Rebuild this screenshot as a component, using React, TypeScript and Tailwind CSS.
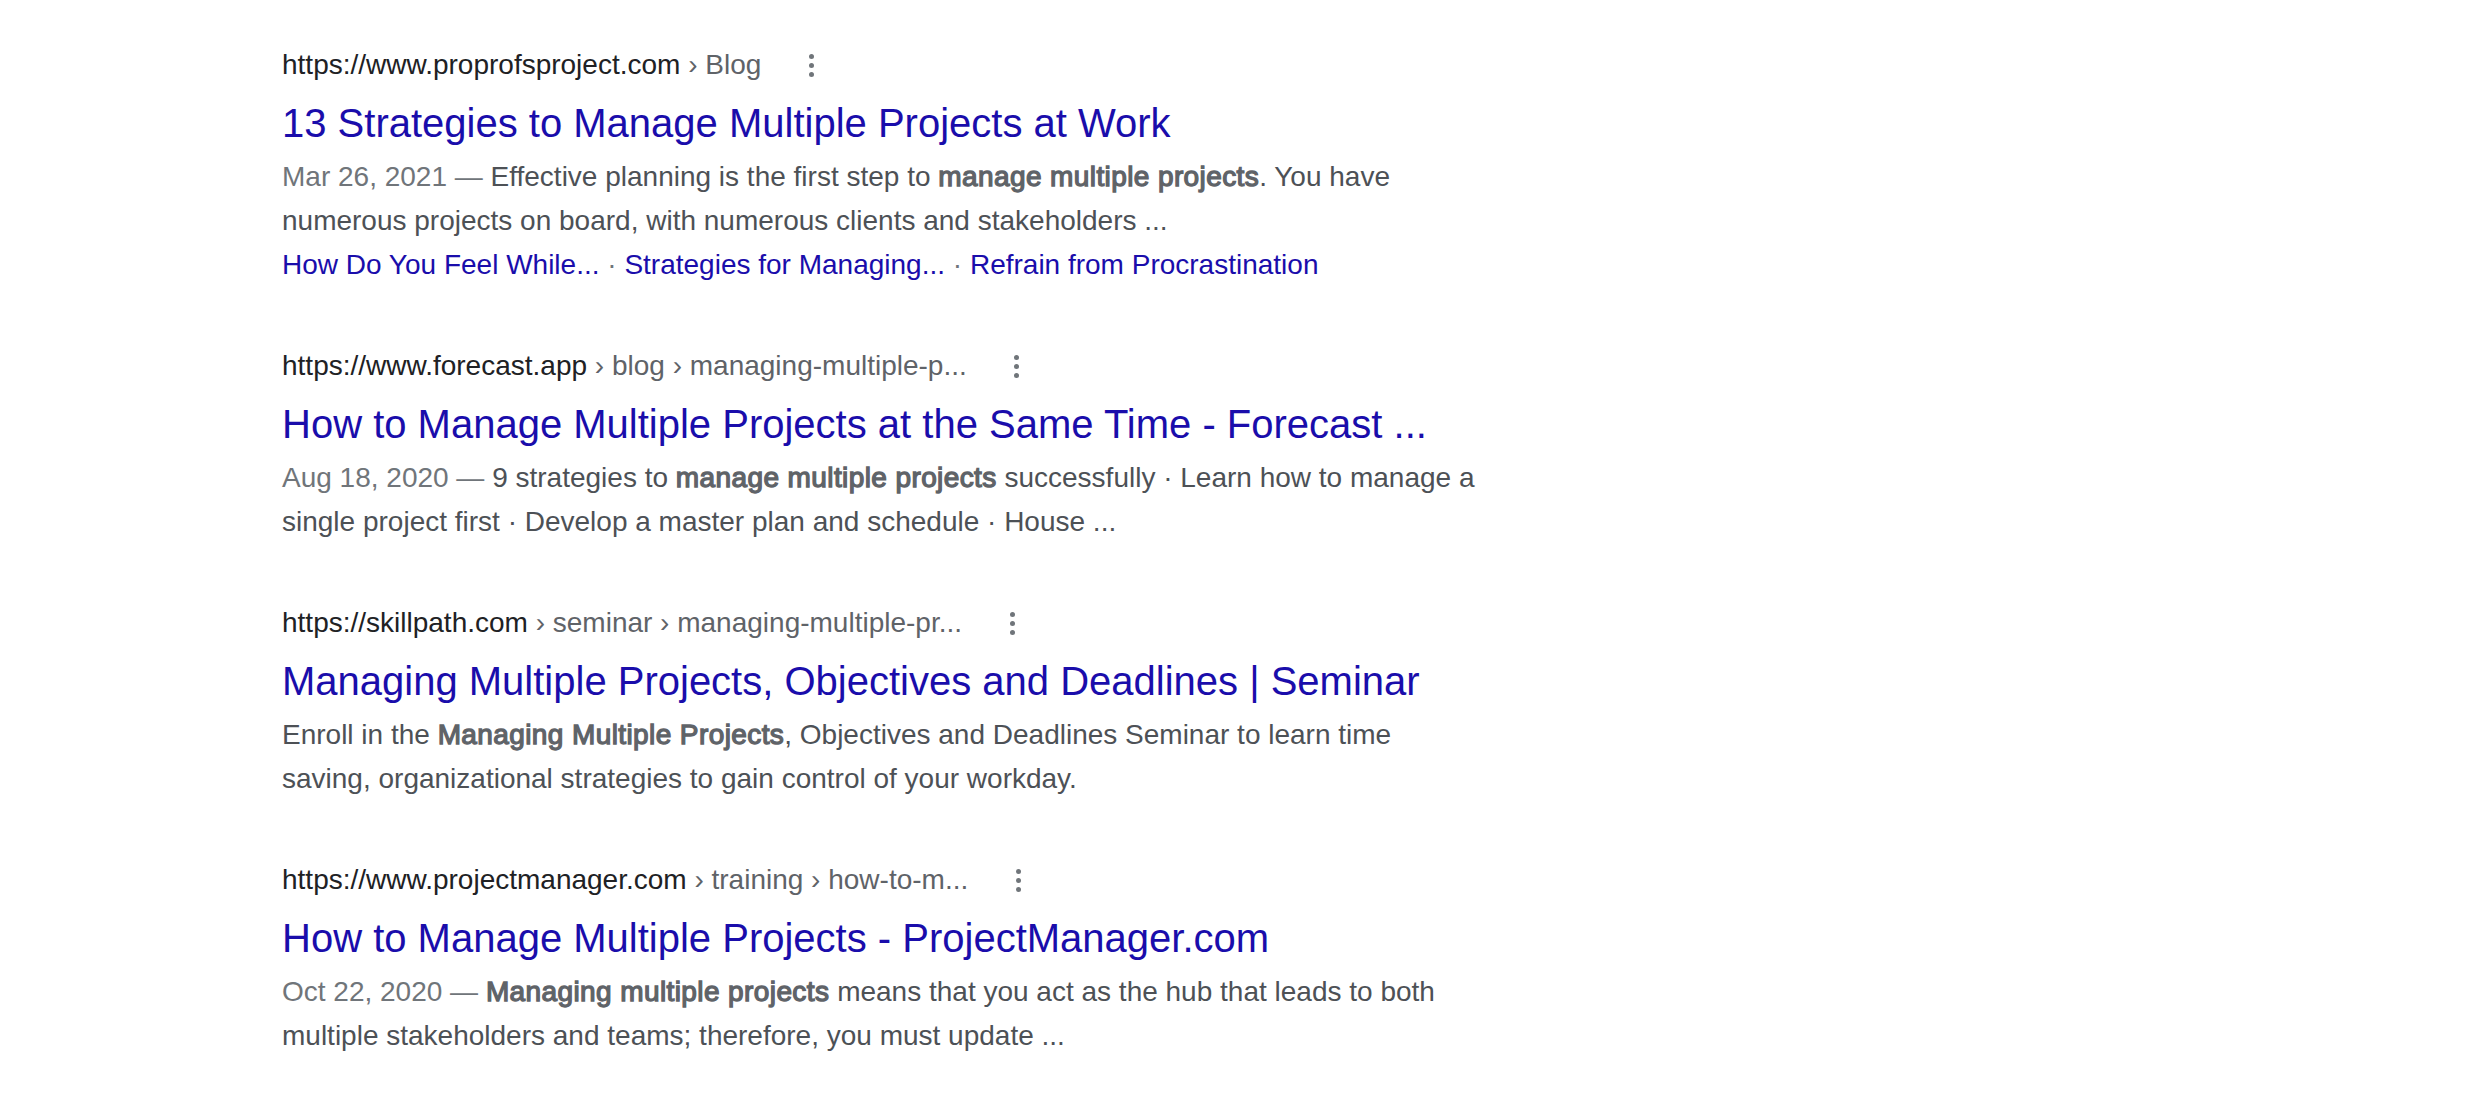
import React from "react";

type Result = {
  domain: string;
  crumbs: string;
  title: string;
  lines: React.ReactNode[];
  sitelinks?: string[];
};

const Date = ({ children }: { children: React.ReactNode }) => (
  <span className="text-[#70757a]">{children}</span>
);

const B = ({ children }: { children: React.ReactNode }) => (
  <span className="font-normal tracking-[0.4px] text-[#5f6368] [-webkit-text-stroke:1.3px_#5f6368]">
    {children}
  </span>
);

const results: Result[] = [
  {
    domain: "https://www.proprofsproject.com",
    crumbs: " › Blog",
    title: "13 Strategies to Manage Multiple Projects at Work",
    lines: [
      <>
        <Date>Mar 26, 2021 — </Date>Effective planning is the first step to{" "}
        <B>manage multiple projects</B>. You have
      </>,
      <>numerous projects on board, with numerous clients and stakeholders ...</>,
    ],
    sitelinks: [
      "How Do You Feel While...",
      "Strategies for Managing...",
      "Refrain from Procrastination",
    ],
  },
  {
    domain: "https://www.forecast.app",
    crumbs: " › blog › managing-multiple-p...",
    title: "How to Manage Multiple Projects at the Same Time - Forecast ...",
    lines: [
      <>
        <Date>Aug 18, 2020 — </Date>9 strategies to <B>manage multiple projects</B>{" "}
        successfully · Learn how to manage a
      </>,
      <>single project first · Develop a master plan and schedule · House ...</>,
    ],
  },
  {
    domain: "https://skillpath.com",
    crumbs: " › seminar › managing-multiple-pr...",
    title: "Managing Multiple Projects, Objectives and Deadlines | Seminar",
    lines: [
      <>
        Enroll in the <B>Managing Multiple Projects</B>, Objectives and Deadlines
        Seminar to learn time
      </>,
      <>saving, organizational strategies to gain control of your workday.</>,
    ],
  },
  {
    domain: "https://www.projectmanager.com",
    crumbs: " › training › how-to-m...",
    title: "How to Manage Multiple Projects - ProjectManager.com",
    lines: [
      <>
        <Date>Oct 22, 2020 — </Date>
        <B>Managing multiple projects</B> means that you act as the hub that leads to both
      </>,
      <>multiple stakeholders and teams; therefore, you must update ...</>,
    ],
  },
];

const Dots = () => (
  <div className="ml-[32px] flex h-[36px] w-[36px] flex-col items-center justify-center gap-[4px]">
    <span className="block h-[5px] w-[5px] rounded-full bg-[#70757a]" />
    <span className="block h-[5px] w-[5px] rounded-full bg-[#70757a]" />
    <span className="block h-[5px] w-[5px] rounded-full bg-[#70757a]" />
  </div>
);

const ResultItem = ({ r }: { r: Result }) => (
  <div className="flex flex-col">
    <div className="flex h-[36px] items-center">
      <div className="whitespace-nowrap text-[28px] leading-[36px]">
        <span className="text-[#202124]">{r.domain}</span>
        <span className="text-[#5f6368]">{r.crumbs}</span>
      </div>
      <Dots />
    </div>
    <div className="mt-[14px] whitespace-nowrap text-[40px] leading-[52px] text-[#1a0dab]">
      {r.title}
    </div>
    <div className="mt-[6px] text-[28px] leading-[44px] text-[#4d5156]">
      {r.lines.map((l, i) => (
        <div key={i} className="whitespace-nowrap">
          {l}
        </div>
      ))}
      {r.sitelinks && (
        <div className="whitespace-nowrap">
          {r.sitelinks.map((s, i) => (
            <React.Fragment key={i}>
              {i > 0 && <span className="text-[#70757a]"> · </span>}
              <span className="text-[#1a0dab]">{s}</span>
            </React.Fragment>
          ))}
        </div>
      )}
    </div>
  </div>
);

export default function App() {
  return (
    <div className="min-h-[1120px] w-full bg-white pl-[282px] pt-[47px] font-['Liberation_Sans',Arial,sans-serif]">
      <div className="flex flex-col gap-[61px]">
        {results.map((r, i) => (
          <ResultItem key={i} r={r} />
        ))}
      </div>
    </div>
  );
}
